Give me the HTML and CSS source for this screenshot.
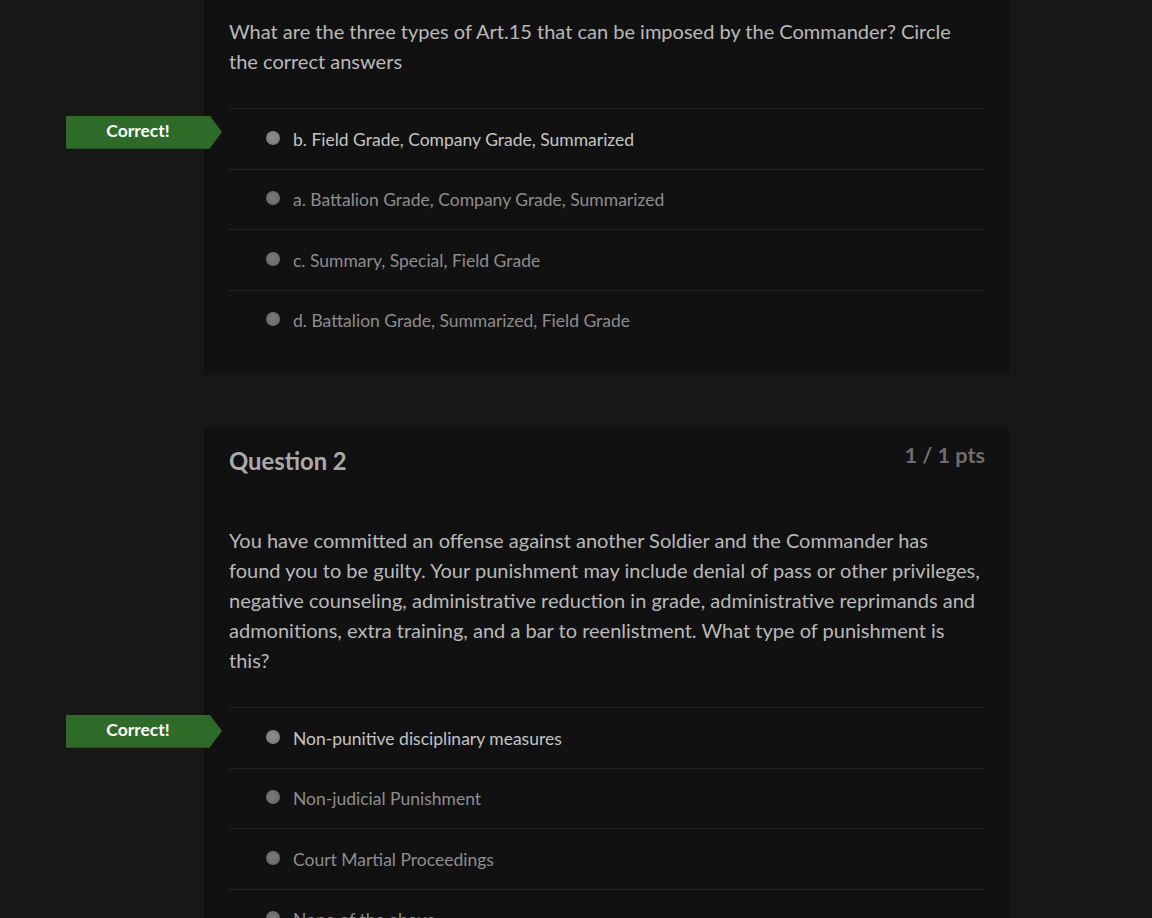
FILE: index.html
```html
<!DOCTYPE html>
<html lang="en">
<head>
<meta charset="utf-8">
<title>Quiz results</title>
<link rel="stylesheet" href="styles.css">
</head>
<body>
<main class="quiz">
  <section class="card card-first">
    <div class="question-text">What are the three types of Art.15 that can be imposed by the Commander? Circle the correct answers</div>
    <ul class="answers">
      <li class="answer selected">
        <span class="badge">Correct!</span>
        <span class="dot"></span><span class="label">b. Field Grade, Company Grade, Summarized</span>
      </li>
      <li class="answer"><span class="dot"></span><span class="label">a. Battalion Grade, Company Grade, Summarized</span></li>
      <li class="answer"><span class="dot"></span><span class="label">c. Summary, Special, Field Grade</span></li>
      <li class="answer"><span class="dot"></span><span class="label">d. Battalion Grade, Summarized, Field Grade</span></li>
    </ul>
  </section>

  <section class="card">
    <header class="card-header">
      <h2 class="title">Question 2</h2>
      <span class="points">1 / 1 pts</span>
    </header>
    <div class="question-text">You have committed an offense against another Soldier and the Commander has found you to be guilty. Your punishment may include denial of pass or other privileges, negative counseling, administrative reduction in grade, administrative reprimands and admonitions, extra training, and a bar to reenlistment. What type of punishment is this?</div>
    <ul class="answers">
      <li class="answer selected">
        <span class="badge">Correct!</span>
        <span class="dot"></span><span class="label">Non-punitive disciplinary measures</span>
      </li>
      <li class="answer"><span class="dot"></span><span class="label">Non-judicial Punishment</span></li>
      <li class="answer"><span class="dot"></span><span class="label">Court Martial Proceedings</span></li>
      <li class="answer"><span class="dot"></span><span class="label">None of the above</span></li>
    </ul>
  </section>
</main>
</body>
</html>
```

FILE: styles.css
```css
html, body {
  margin: 0;
  padding: 0;
  background: #171717;
  font-family: Lato, "Open Sans", "Liberation Sans", sans-serif;
  height: 918px;
  overflow: hidden;
}

.quiz {
  width: 805px;
  margin-left: 204px;
  display: flex;
  flex-direction: column;
  gap: 53px;
}

.card {
  background: #111111;
  padding: 20px 24px 25px 25px;
}

.card-first {
  padding-top: 16px;
}

.card-header {
  display: flex;
  justify-content: space-between;
  align-items: flex-start;
  margin-bottom: 51px;
}

.title {
  margin: 0;
  font-size: 23.8px;
  line-height: 26px;
  font-weight: 700;
  color: #aaaaaa;
}

.points {
  font-size: 21.6px;
  line-height: 14px;
  font-weight: 700;
  color: #6e6e6e;
}

.question-text {
  font-size: 20px;
  line-height: 30px;
  color: #b9b9b9;
  margin-bottom: 32px;
  padding-right: 2px;
}

.answers {
  list-style: none;
  margin: 0;
  padding: 0;
}

.answer {
  position: relative;
  display: flex;
  align-items: center;
  border-top: 1px solid #232323;
  padding-left: 37px;
  padding-top: 2px;
  box-sizing: border-box;
  height: 60.5px;
}

.dot {
  width: 14px;
  height: 14px;
  border-radius: 50%;
  background: radial-gradient(circle at 50% 45%, #7a7a7a 0%, #6b6b6b 70%, #5a5a5a 100%);
  margin-right: 13px;
  margin-top: -4px;
  flex: none;
}

.selected .dot {
  background: radial-gradient(circle at 50% 45%, #8c8c8c 0%, #7d7d7d 70%, #6a6a6a 100%);
}

.label {
  font-size: 17.5px;
  line-height: 20px;
  color: #8d8d8d;
}

.selected .label {
  color: #c4c4c4;
}

.badge {
  position: absolute;
  left: -163px;
  top: 7px;
  width: 144px;
  height: 33px;
  background: #2f6b28;
  color: #ffffff;
  font-size: 17.5px;
  font-weight: 700;
  line-height: 30px;
  text-align: center;
  box-sizing: border-box;
  border-bottom: 1px solid #245620;
}

.badge::after {
  content: "";
  position: absolute;
  left: 144px;
  top: 0;
  width: 0;
  height: 0;
  border-top: 16.5px solid transparent;
  border-bottom: 16.5px solid transparent;
  border-left: 12px solid #2f6b28;
}
```
